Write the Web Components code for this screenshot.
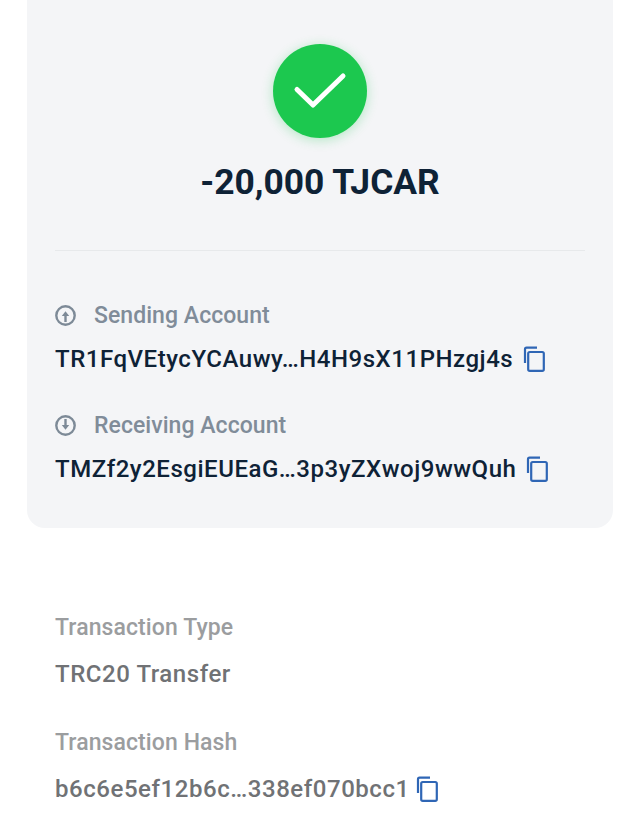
<!DOCTYPE html>
<html>
<head>
<meta charset="utf-8">
<style>
    html, body { margin: 0; padding: 0; background: #fff; }
    body { width: 640px; height: 832px; overflow: hidden; font-family: Roboto, "Liberation Sans", sans-serif; }
</style>
</head>
<body>
<tx-detail>
    <tx-summary amount="-20,000 TJCAR">
        <tx-account direction="up" label="Sending Account" value="TR1FqVEtycYCAuwy…H4H9sX11PHzgj4s"></tx-account>
        <tx-account direction="down" label="Receiving Account" value="TMZf2y2EsgiEUEaG…3p3yZXwoj9wwQuh"></tx-account>
    </tx-summary>
    <tx-field label="Transaction Type" value="TRC20 Transfer"></tx-field>
    <tx-field label="Transaction Hash" value="b6c6e5ef12b6c…338ef070bcc1" copy></tx-field>
</tx-detail>
<script>
    /**
     * Copy icon used beside long addresses.
     */
    class TxCopy extends HTMLElement {
        constructor() {
            super();
            this.attachShadow({ mode: 'open' });
        }

        connectedCallback() {
            this.shadowRoot.innerHTML = `
                <style>
                    :host { display: inline-flex; flex: none; }
                    svg { display: block; }
                </style>
                <svg width="22" height="26" viewBox="0 0 22 26" fill="none" stroke="#2f66b5" stroke-width="2.2">
                    <path d="M2 17V3.2Q2 1.6 3.6 1.6H14"/>
                    <rect x="5.2" y="6" width="15.6" height="18.8" rx="1.6"/>
                </svg>
            `;
        }
    }

    /**
     * Sending or receiving account row inside the summary card.
     */
    class TxAccount extends HTMLElement {
        constructor() {
            super();
            this.attachShadow({ mode: 'open' });
        }

        connectedCallback() {
            const arrow = this.getAttribute('direction') === 'up'
                ? '<path d="M10.5 17V9.5"/><path d="M6.8 11L10.5 6.2L14.2 11Z" fill="#7d8a97" stroke="none"/>'
                : '<path d="M10.5 4V11.5"/><path d="M6.8 10L10.5 14.8L14.2 10Z" fill="#7d8a97" stroke="none"/>';
            this.shadowRoot.innerHTML = `
                <style>
                    :host { display: block; height: 110px; }
                    .label { display: flex; align-items: center; gap: 18px; height: 30px; color: #808c99; font-size: 23px; font-weight: 500; letter-spacing: 0.05px; }
                    svg.dir { flex: none; display: block; }
                    .value { display: flex; align-items: center; gap: 10px; margin-top: 14px; height: 30px; color: #0e2236; font-size: 24px; font-weight: 500; letter-spacing: 0.53px; white-space: nowrap; }
                </style>
                <div class="label">
                    <svg class="dir" width="21" height="21" viewBox="0 0 21 21" fill="none" stroke="#7d8a97" stroke-width="2.4">
                        <circle cx="10.5" cy="10.5" r="9.2"/>
                        ${arrow}
                    </svg>
                    <span>${this.getAttribute('label')}</span>
                </div>
                <div class="value"><span>${this.getAttribute('value')}</span><tx-copy></tx-copy></div>
            `;
        }
    }

    /**
     * Grey card with the status tick, the amount and the accounts.
     */
    class TxSummary extends HTMLElement {
        constructor() {
            super();
            this.attachShadow({ mode: 'open' });
        }

        connectedCallback() {
            this.shadowRoot.innerHTML = `
                <style>
                    :host { display: block; margin: -20px 27px 85px 27px; height: 548px; box-sizing: border-box; padding: 64px 28px 0 28px; background: #f4f5f7; border-radius: 18px; }
                    .tick { width: 94px; height: 94px; margin: 0 auto; border-radius: 50%; background: #1cc84f; box-shadow: 0 2px 12px rgba(28, 200, 79, 0.3); display: flex; align-items: center; justify-content: center; }
                    svg { display: block; }
                    h1 { margin: 18px 0 0; height: 52px; line-height: 52px; text-align: center; font-size: 35.4px; font-weight: 700; color: #0e2236; }
                    hr { margin: 42px 0 0; border: 0; border-top: 1px solid #e7e9eb; }
                    .accounts { margin-top: 49px; }
                </style>
                <div class="tick">
                    <svg width="54" height="38" viewBox="0 0 54 38" fill="none" stroke="#fff" stroke-width="5" stroke-linecap="round" stroke-linejoin="round">
                        <path d="M4 17.5L20 33L50 4"/>
                    </svg>
                </div>
                <h1>${this.getAttribute('amount')}</h1>
                <hr>
                <div class="accounts"><slot></slot></div>
            `;
        }
    }

    /**
     * Plain label and value pair under the card.
     */
    class TxField extends HTMLElement {
        constructor() {
            super();
            this.attachShadow({ mode: 'open' });
        }

        connectedCallback() {
            const copy = this.hasAttribute('copy') ? '<tx-copy></tx-copy>' : '';
            this.shadowRoot.innerHTML = `
                <style>
                    :host { display: block; height: 115px; padding-left: 55px; }
                    .label { height: 30px; line-height: 30px; color: #9b9d9f; font-size: 23px; font-weight: 500; letter-spacing: 0.1px; }
                    .value { display: flex; align-items: center; gap: 6px; margin-top: 16px; height: 30px; color: #707275; font-size: 24px; font-weight: 500; letter-spacing: 0.55px; white-space: nowrap; }
                </style>
                <div class="label">${this.getAttribute('label')}</div>
                <div class="value"><span>${this.getAttribute('value')}</span>${copy}</div>
            `;
        }
    }

    /**
     * Page wrapper: card first, then the plain fields.
     */
    class TxDetail extends HTMLElement {
        constructor() {
            super();
            this.attachShadow({ mode: 'open' });
        }

        connectedCallback() {
            this.shadowRoot.innerHTML = `
                <style>
                    :host { display: block; }
                </style>
                <slot></slot>
            `;
        }
    }

    customElements.define('tx-copy', TxCopy);
    customElements.define('tx-account', TxAccount);
    customElements.define('tx-summary', TxSummary);
    customElements.define('tx-field', TxField);
    customElements.define('tx-detail', TxDetail);
</script>
</body>
</html>
